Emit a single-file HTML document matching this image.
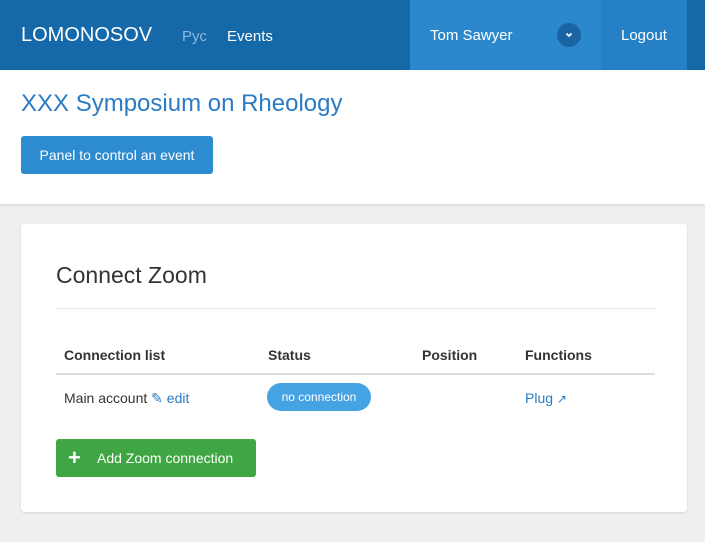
<!DOCTYPE html>
<html><head><style>
*{margin:0;padding:0;box-sizing:border-box}
body{width:705px;height:542px;background:#efefef;font-family:"Liberation Sans",sans-serif;overflow:hidden;position:relative}
.nav{position:absolute;left:0;top:0;width:705px;height:70px;background:#1569a9}
.nav .t{position:absolute;color:#fff}
.user{position:absolute;left:410px;top:0;width:191px;height:70px;background:#2b88cc}
.logout{position:absolute;left:601px;top:0;width:86px;height:70px;background:#2580c6}
.top{position:absolute;left:0;top:70px;width:705px;height:134px;background:#fff;box-shadow:0 1px 3px rgba(0,0,0,.12)}
.card{position:absolute;left:21px;top:224px;width:666px;height:288px;background:#fff;border-radius:4px;box-shadow:0 1px 2px rgba(0,0,0,.1)}
.a{position:absolute}
</style></head><body>
<div class="nav">
<div class="t" style="left:21px;top:24px;font-size:20px">LOMONOSOV</div>
<div class="t" style="left:182px;top:28px;font-size:15px;color:#8ab8e0">Рус</div>
<div class="t" style="left:227px;top:28px;font-size:15px">Events</div>
<div class="user"><div class="t" style="left:20px;top:27px;font-size:15px">Tom Sawyer</div>
<div style="position:absolute;left:147px;top:23px;width:24px;height:24px;border-radius:50%;background:#1a64a4"><svg width="24" height="24" viewBox="0 0 24 24"><path d="M9.5 10.5 L12 13 L14.5 10.5" stroke="#fff" stroke-width="1.8" fill="none"/></svg></div></div>
<div class="logout"><div class="t" style="left:20px;top:27px;font-size:15px">Logout</div></div>
</div>
<div class="top">
<div class="a" style="left:21px;top:20px;font-size:24px;color:#2a7bc4">XXX Symposium on Rheology</div>
<div class="a" style="left:21px;top:66px;width:192px;height:38px;background:#2d8bcf;border-radius:3px;color:#fff;font-size:14px;line-height:38px;text-align:center">Panel to control an event</div>
</div>
<div class="card">
<div class="a" style="left:35px;top:38px;font-size:23px;color:#333">Connect Zoom</div>
<div class="a" style="left:35px;top:84px;width:599px;height:1px;background:#e4e4e4"></div>
<div class="a" style="left:43px;top:123px;font-size:14px;font-weight:bold;color:#333">Connection list</div>
<div class="a" style="left:247px;top:123px;font-size:14px;font-weight:bold;color:#333">Status</div>
<div class="a" style="left:401px;top:123px;font-size:14px;font-weight:bold;color:#333">Position</div>
<div class="a" style="left:504px;top:123px;font-size:14px;font-weight:bold;color:#333">Functions</div>
<div class="a" style="left:35px;top:149px;width:599px;height:2px;background:#ddd"></div>
<div class="a" style="left:43px;top:166px;font-size:14px;color:#333">Main account <span style="color:#2a7bc4">&#9998; edit</span></div>
<div class="a" style="left:246px;top:159px;width:104px;height:28px;border-radius:14px;background:#46a3e3;color:#fff;font-size:12px;text-align:center;line-height:28px">no connection</div>
<div class="a" style="left:504px;top:166px;font-size:14px;color:#2a7bc4">Plug <span style="font-size:12px">&#8599;</span></div>
<div class="a" style="left:35px;top:215px;width:200px;height:38px;background:#3fa643;border-radius:3px;color:#fff;font-size:14px;line-height:38px"><span style="position:absolute;left:12px;font-size:22px;font-weight:bold">+</span><span style="position:absolute;left:41px">Add Zoom connection</span></div>
</div>
</body></html>
